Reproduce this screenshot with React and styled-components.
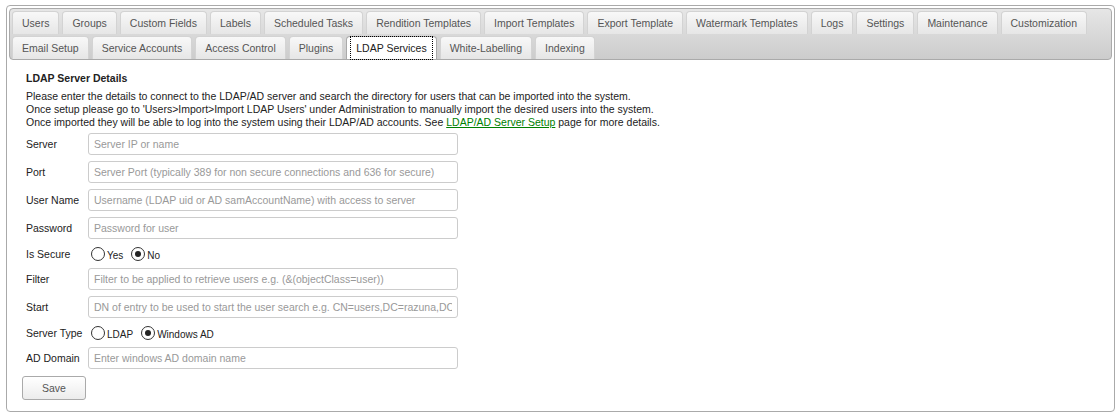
import React, {useState} from "react";
import styled, {createGlobalStyle} from "styled-components";

const GlobalStyle = createGlobalStyle`
  body {
    margin: 0;
    font-family: "Liberation Sans", Arial, sans-serif;
    font-size: 10.5px;
    color: #222;
    background: #fff;
  }
`

const Tabs = styled.div`
  margin: 5px 0 0 6px;
  width: 1109px;
  height: 407px;
  box-sizing: border-box;
  border: 1px solid #aaa;
  border-radius: 4px;
  padding: 2px;
`

const TabBar = styled.ul`
  list-style: none;
  margin: 0;
  padding: 2px 2px 0 2px;
  display: flex;
  flex-wrap: wrap;
  gap: 2px 3px;
  border: 1px solid #aaa;
  border-radius: 4px;
  background: linear-gradient(#e6e6e6, #cccccc);
`

const Tab = styled.li`
  box-sizing: border-box;
  height: 23px;
  display: flex;
  align-items: center;
  padding: 0 9px;
  border: 1px solid ${p => p.$active ? '#aaa' : '#d3d3d3'};
  border-bottom: 0;
  border-radius: 4px 4px 0 0;
  background: ${p => p.$active ? '#fff' : 'linear-gradient(#f8f8f8, #e6e6e6)'};
  color: ${p => p.$active ? '#212121' : '#555'};
  cursor: pointer;
`

const TabLabel = styled.span`
  outline: ${p => p.$active ? '1px dotted #000' : 'none'};
  outline-offset: 5px;
`

const Panel = styled.div`
  padding: 12px 14px 0 17px;
`

const Title = styled.div`
  font-weight: bold;
  margin-bottom: 5px;
  line-height: 13px;
`

const Info = styled.p`
  margin: 0 0 4px 0;
  line-height: 13px;
`

const Link = styled.a`
  color: #008000;
  text-decoration: underline;
`

const Form = styled.div`
  display: grid;
  grid-template-columns: 62px 370px;
  row-gap: 6px;
  align-items: center;
`

const Label = styled.label`
  color: #222;
`

const Input = styled.input`
  box-sizing: border-box;
  height: 22px;
  width: 370px;
  border: 1px solid #ccc;
  border-radius: 3px;
  padding: 0 5px;
  font: inherit;
  font-size: 10.5px;
  &::placeholder { color: #999; }
`

const RadioRow = styled.div`
  display: flex;
  align-items: center;
  height: 17px;
  padding-left: 3px;
`

const RadioOpt = styled.label`
  display: flex;
  align-items: flex-end;
  margin-right: 8px;
  font-size: 10px;
  cursor: pointer;
`

const Circle = styled.span`
  width: 12px;
  height: 12px;
  border: 1px solid #333;
  border-radius: 50%;
  display: flex;
  align-items: center;
  justify-content: center;
  margin-right: 2px;
  background: #fff;
  &::after {
    content: "";
    width: 6px;
    height: 6px;
    border-radius: 50%;
    background: ${p => p.$on ? '#222' : 'transparent'};
  }
`

const SaveButton = styled.button`
  margin: 7px 0 0 -4px;
  width: 64px;
  height: 24px;
  border: 1px solid #aaa;
  border-radius: 3px;
  background: linear-gradient(#fff, #ececec);
  color: #555;
  font: inherit;
`

const tabs = [
  'Users', 'Groups', 'Custom Fields', 'Labels', 'Scheduled Tasks', 'Rendition Templates',
  'Import Templates', 'Export Template', 'Watermark Templates', 'Logs', 'Settings',
  'Maintenance', 'Customization', 'Email Setup', 'Service Accounts', 'Access Control',
  'Plugins', 'LDAP Services', 'White-Labelling', 'Indexing'
]

function Radio({options, value, onChange}) {
    return (
        <RadioRow>
            {options.map(o => (
                <RadioOpt key={o} onClick={() => onChange(o)}>
                    <Circle $on={value === o} />{o}
                </RadioOpt>
            ))}
        </RadioRow>
    )
}

function App() {
    const [active, setActive] = useState('LDAP Services');
    const [secure, setSecure] = useState('No');
    const [serverType, setServerType] = useState('Windows AD');

    return (
        <>
            <GlobalStyle />
            <Tabs>
                <TabBar>
                    {tabs.map(t => (
                        <Tab key={t} $active={t === active} onClick={() => setActive(t)}>
                            <TabLabel $active={t === active}>{t}</TabLabel>
                        </Tab>
                    ))}
                </TabBar>
                <Panel>
                    <Title>LDAP Server Details</Title>
                    <Info>
                        Please enter the details to connect to the LDAP/AD server and search the directory for users that can be imported into the system.<br />
                        Once setup please go to 'Users&gt;Import&gt;Import LDAP Users' under Administration to manually import the desired users into the system.<br />
                        Once imported they will be able to log into the system using their LDAP/AD accounts. See <Link href="#">LDAP/AD Server Setup</Link> page for more details.
                    </Info>
                    <Form>
                        <Label>Server</Label>
                        <Input placeholder="Server IP or name" />
                        <Label>Port</Label>
                        <Input placeholder="Server Port (typically 389 for non secure connections and 636 for secure)" />
                        <Label>User Name</Label>
                        <Input placeholder="Username (LDAP uid or AD samAccountName) with access to server" />
                        <Label>Password</Label>
                        <Input type="password" placeholder="Password for user" />
                        <Label>Is Secure</Label>
                        <Radio options={['Yes', 'No']} value={secure} onChange={setSecure} />
                        <Label>Filter</Label>
                        <Input placeholder="Filter to be applied to retrieve users e.g. (&(objectClass=user))" />
                        <Label>Start</Label>
                        <Input placeholder="DN of entry to be used to start the user search e.g. CN=users,DC=razuna,DC=com" />
                        <Label>Server Type</Label>
                        <Radio options={['LDAP', 'Windows AD']} value={serverType} onChange={setServerType} />
                        <Label>AD Domain</Label>
                        <Input placeholder="Enter windows AD domain name" />
                    </Form>
                    <SaveButton>Save</SaveButton>
                </Panel>
            </Tabs>
        </>
    );
}

export default App;
